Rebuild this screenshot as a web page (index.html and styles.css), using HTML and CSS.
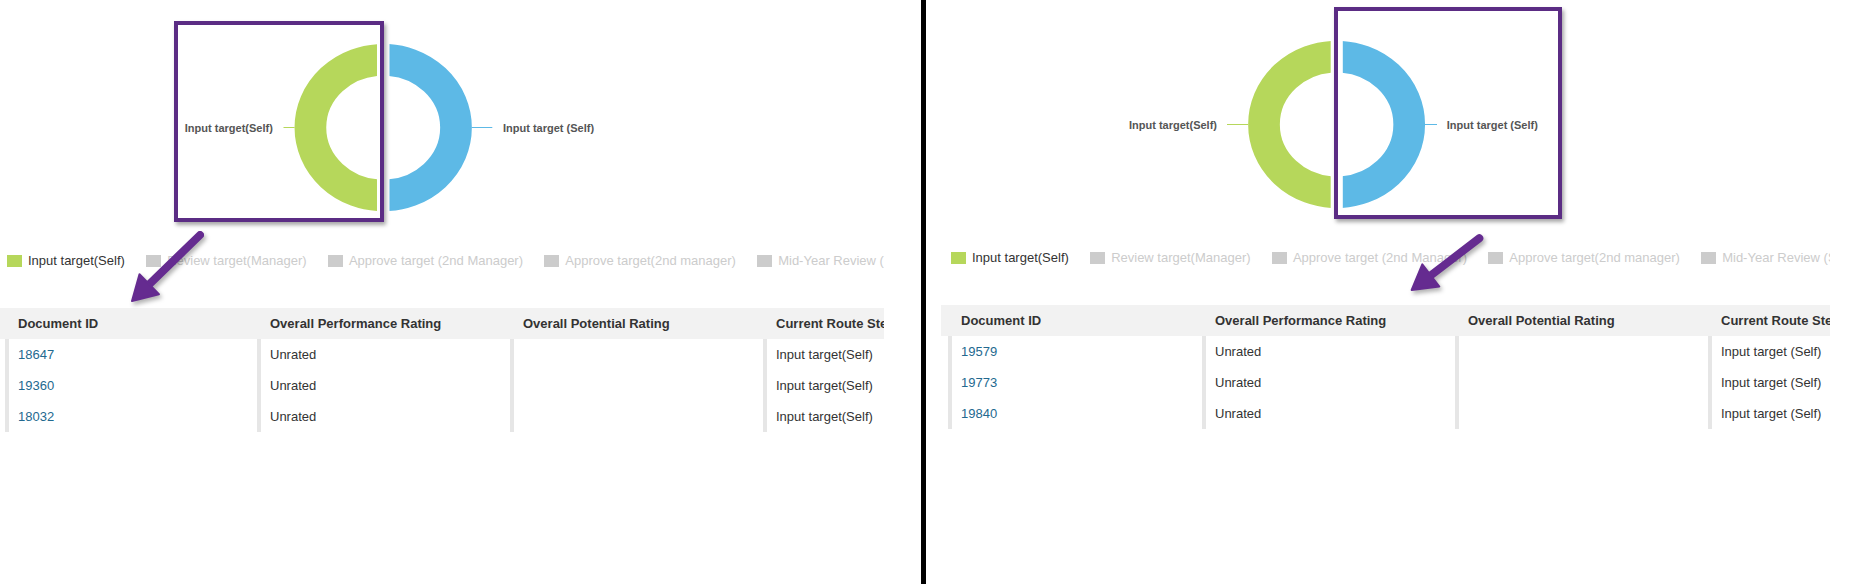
FILE: index.html
```html
<!DOCTYPE HTML>
<html lang="en">

<head>
    <meta charset="utf-8">
    <title>Route step chart - before and after</title>

    <link rel="stylesheet" href="styles.css">
</head>

<body>

    <!-- before -->
    <div class="panel panel-a">
        <div class="shot shot-a">
            <svg class="chart" width="884" height="251" viewBox="0 0 884 251">
                <defs>
                    <clipPath id="a-left"><rect x="0" y="0" width="376.9" height="251"/></clipPath>
                    <clipPath id="a-right"><rect x="389.5" y="0" width="300" height="251"/></clipPath>
                </defs>
                <ellipse class="ring ring-green" cx="383.2" cy="127.6" rx="72.8" ry="67.8" clip-path="url(#a-left)"/>
                <ellipse class="ring ring-blue" cx="383.2" cy="127.6" rx="72.8" ry="67.8" clip-path="url(#a-right)"/>
                <line class="lead lead-green" x1="283.5" y1="127.5" x2="294.6" y2="127.5"/>
                <line class="lead lead-blue" x1="471.7" y1="127.5" x2="492.3" y2="127.5"/>
                <text class="chart-label" x="272.8" y="131.5" text-anchor="end">Input target(Self)</text>
                <text class="chart-label" x="503" y="131.5">Input target (Self)</text>
            </svg>

            <ul class="legend">
                <li class="on"><span class="swatch"></span>Input target(Self)</li>
                <li><span class="swatch"></span>Review target(Manager)</li>
                <li><span class="swatch"></span>Approve target (2nd Manager)</li>
                <li><span class="swatch"></span>Approve target(2nd manager)</li>
                <li><span class="swatch"></span>Mid-Year Review (Self)</li>
            </ul>

            <div class="grid">
                <div class="grid-head">
                    <div>Document ID</div>
                    <div>Overall Performance Rating</div>
                    <div>Overall Potential Rating</div>
                    <div>Current Route Step</div>
                </div>
                <div class="grid-row">
                    <div><a href="#">18647</a></div>
                    <div>Unrated</div>
                    <div></div>
                    <div>Input target(Self)</div>
                </div>
                <div class="grid-row">
                    <div><a href="#">19360</a></div>
                    <div>Unrated</div>
                    <div></div>
                    <div>Input target(Self)</div>
                </div>
                <div class="grid-row">
                    <div><a href="#">18032</a></div>
                    <div>Unrated</div>
                    <div></div>
                    <div>Input target(Self)</div>
                </div>
            </div>
        </div>

        <div class="mark mark-a"></div>
        <svg class="arrow arrow-a" width="90" height="85" viewBox="0 0 90 85">
            <line x1="80" y1="10" x2="29.2" y2="59.3"/>
            <polygon points="12,76 38.9,69.3 19.5,49.3"/>
        </svg>
    </div>

    <div class="divider"></div>

    <!-- after -->
    <div class="panel panel-b">
        <div class="shot shot-b">
            <svg class="chart" width="889" height="248" viewBox="0 0 889 248">
                <defs>
                    <clipPath id="b-left"><rect x="0" y="0" width="389.7" height="248"/></clipPath>
                    <clipPath id="b-right"><rect x="401.8" y="0" width="300" height="248"/></clipPath>
                </defs>
                <ellipse class="ring ring-green" cx="395.6" cy="124.4" rx="72.6" ry="67.8" clip-path="url(#b-left)"/>
                <ellipse class="ring ring-blue" cx="395.6" cy="124.4" rx="72.6" ry="67.8" clip-path="url(#b-right)"/>
                <line class="lead lead-green" x1="286" y1="124.5" x2="307" y2="124.5"/>
                <line class="lead lead-blue" x1="484" y1="124.5" x2="496" y2="124.5"/>
                <text class="chart-label" x="276" y="128.5" text-anchor="end">Input target(Self)</text>
                <text class="chart-label" x="505.8" y="128.5">Input target (Self)</text>
            </svg>

            <ul class="legend">
                <li class="on"><span class="swatch"></span>Input target(Self)</li>
                <li><span class="swatch"></span>Review target(Manager)</li>
                <li><span class="swatch"></span>Approve target (2nd Manager)</li>
                <li><span class="swatch"></span>Approve target(2nd manager)</li>
                <li><span class="swatch"></span>Mid-Year Review (Self)</li>
            </ul>

            <div class="grid">
                <div class="grid-head">
                    <div>Document ID</div>
                    <div>Overall Performance Rating</div>
                    <div>Overall Potential Rating</div>
                    <div>Current Route Step</div>
                </div>
                <div class="grid-row">
                    <div><a href="#">19579</a></div>
                    <div>Unrated</div>
                    <div></div>
                    <div>Input target (Self)</div>
                </div>
                <div class="grid-row">
                    <div><a href="#">19773</a></div>
                    <div>Unrated</div>
                    <div></div>
                    <div>Input target (Self)</div>
                </div>
                <div class="grid-row">
                    <div><a href="#">19840</a></div>
                    <div>Unrated</div>
                    <div></div>
                    <div>Input target (Self)</div>
                </div>
            </div>
        </div>

        <div class="mark mark-b"></div>
        <svg class="arrow arrow-b" width="90" height="80" viewBox="0 0 90 80">
            <line x1="78.3" y1="13.3" x2="29.8" y2="50.4"/>
            <polygon points="10.7,65 38.3,61.5 21.3,39.3"/>
        </svg>
    </div>

</body>

</html>
```

FILE: styles.css
```css
*{
    box-sizing: border-box;
    padding: 0;
    margin: 0;
}

body{
    display: flex;
    height: 584px;
    overflow: hidden;
    background: #ffffff;
    font-family: "Liberation Sans", Arial, sans-serif;
    font-size: 13px;
    color: #333333;
}

.panel{
    position: relative;
    height: 100%;
}

.panel-a{
    width: 921px;
    flex: none;
}

.panel-b{
    flex: 1;
}

.divider{
    width: 5px;
    flex: none;
    background: #000000;
}

.shot{
    overflow: hidden;
}

.shot-a{
    width: 884px;
}

.shot-b{
    width: 889px;
    margin-left: 15px;
}

/* donut */
.chart{
    display: block;
}

.ring{
    fill: none;
    stroke-width: 31.7;
}

.ring-green{
    stroke: #b6d75b;
}

.ring-blue{
    stroke: #5db9e6;
}

.lead{
    stroke-width: 1;
}

.lead-green{
    stroke: #b6d75b;
}

.lead-blue{
    stroke: #5db9e6;
}

.chart-label{
    font-family: "Liberation Sans", Arial, sans-serif;
    font-size: 11px;
    font-weight: bold;
    fill: #555555;
}

/* legend */
.legend{
    list-style: none;
    display: flex;
    white-space: nowrap;
    height: 20px;
    line-height: 20px;
    margin-bottom: 37px;
    color: #cccccc;
}

.shot-a .legend{
    padding-left: 7px;
}

.shot-b .legend{
    padding-left: 10px;
}

.legend li{
    display: flex;
    align-items: center;
    margin-right: 21.3px;
}

.legend .on{
    color: #333333;
}

.swatch{
    width: 15px;
    height: 12px;
    margin-right: 6px;
    background: #cccccc;
}

.legend .on .swatch{
    background: #b6d75b;
}

/* table */
.grid-head,
.grid-row{
    display: grid;
    grid-template-columns: 252px 253px 253px 1fr;
    white-space: nowrap;
}

.shot-a .grid-head,
.shot-a .grid-row{
    padding-left: 5px;
}

.shot-b .grid-head,
.shot-b .grid-row{
    padding-left: 7px;
    grid-template-columns: 254px 253px 253px 1fr;
}

.grid-head{
    background: #f2f2f2;
    font-weight: bold;
}

.grid-head>div{
    height: 31px;
    line-height: 31px;
    padding-left: 13px;
    overflow: hidden;
}

.grid-row>div{
    height: 31px;
    line-height: 31px;
    padding-left: 9px;
    border-left: 4px solid #e6e6e6;
    overflow: hidden;
}

.grid-row a{
    color: #23698f;
    text-decoration: none;
}

/* call-outs drawn over the shots */
.mark{
    position: absolute;
    border: 4px solid #5b2c84;
    box-shadow: 2px 3px 4px rgba(0, 0, 0, 0.35);
}

.mark-a{
    left: 174px;
    top: 21px;
    width: 210px;
    height: 201px;
}

.mark-b{
    left: 408px;
    top: 7px;
    width: 228px;
    height: 212px;
}

.arrow{
    position: absolute;
    overflow: visible;
    filter: drop-shadow(2px 3px 2px rgba(0, 0, 0, 0.3));
}

.arrow line{
    stroke: #652b90;
    stroke-width: 8;
    stroke-linecap: round;
}

.arrow polygon{
    fill: #652b90;
    stroke: #652b90;
    stroke-width: 2;
    stroke-linejoin: round;
}

.arrow-a{
    left: 120px;
    top: 225px;
}

.arrow-b{
    left: 475px;
    top: 225px;
}
```
